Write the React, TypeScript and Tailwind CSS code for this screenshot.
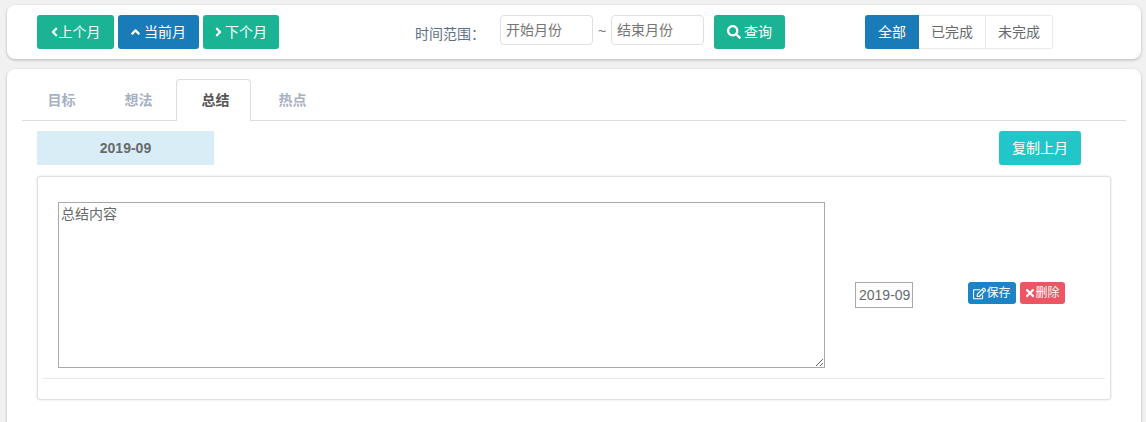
import React from 'react';
import { FaAngleLeft, FaAngleUp, FaAngleRight, FaSearch, FaRegEdit, FaTimes } from 'react-icons/fa';

const font = "font-['Liberation_Sans','Noto_Sans_CJK_SC',sans-serif]";

const tabs = ['目标', '想法', '总结', '热点'];

export default function App() {
  return (
    <div className={`${font} h-[422px] overflow-hidden bg-[#f1f1f1] pt-[5px] pl-[7px] pr-[5px] text-[14px] text-[#676a6c]`}>
      {/* toolbar */}
      <div className="flex h-[54px] items-start rounded-[8px] bg-white pt-[10px] pl-[30px] shadow-[0_1px_3px_rgba(0,0,0,0.25)]">
        <div className="flex gap-[4px]">
          <button className="flex h-[34px] w-[77px] items-center justify-center gap-[1px] rounded-[3px] bg-[#1ab394] text-white">
            <FaAngleLeft className="h-[14px] w-[7px]" />
            <span>上个月</span>
          </button>
          <button className="flex h-[34px] w-[81px] items-center justify-center gap-[4px] rounded-[3px] bg-[#1a7bb9] text-white">
            <FaAngleUp className="h-[14px] w-[9px]" />
            <span>当前月</span>
          </button>
          <button className="flex h-[34px] w-[76px] items-center justify-center gap-[3px] rounded-[3px] bg-[#1ab394] text-white">
            <FaAngleRight className="h-[14px] w-[7px]" />
            <span>下个月</span>
          </button>
        </div>

        <span className="ml-[136px] mt-[9px] w-[85px] text-[#5c7085]">时间范围：</span>
        <input
          placeholder="开始月份"
          className="h-[30px] w-[93px] rounded-[4px] border border-[#e0e0e0] px-[5px] text-[14px] outline-none placeholder:text-[#757575]"
        />
        <span className="mx-[5px] mt-[6px] w-[8px] text-[#757575]">~</span>
        <input
          placeholder="结束月份"
          className="h-[30px] w-[93px] rounded-[4px] border border-[#e0e0e0] px-[5px] text-[14px] outline-none placeholder:text-[#757575]"
        />
        <button className="ml-[10px] flex h-[34px] w-[71px] items-center justify-center gap-[3px] rounded-[3px] bg-[#1ab394] text-white">
          <FaSearch className="size-[14px]" />
          <span>查询</span>
        </button>

        <div className="ml-[80px] flex h-[34px]">
          <button className="w-[54px] rounded-l-[3px] bg-[#1a7bb9] text-white">全部</button>
          <button className="w-[67px] border border-l-0 border-[#e7eaec] bg-white">已完成</button>
          <button className="w-[67px] rounded-r-[3px] border border-l-0 border-[#e7eaec] bg-white">未完成</button>
        </div>
      </div>

      {/* main card */}
      <div className="mt-[10px] h-[400px] rounded-[8px] bg-white px-[15px] pt-[10px] shadow-[0_1px_3px_rgba(0,0,0,0.25)]">
        <div className="flex h-[42px] gap-[2px] border-b border-[#dddddd]">
          {tabs.map(tab => (
            <div
              key={tab}
              className={
                tab === '总结'
                  ? 'flex h-[42px] w-[75px] items-center justify-center rounded-t-[4px] border border-b-0 border-[#dddddd] bg-white pl-[4px] font-bold text-[#555555]'
                  : 'flex h-[42px] w-[75px] items-center justify-center pl-[4px] font-bold text-[#a7b1c2]'
              }
            >
              {tab}
            </div>
          ))}
        </div>

        <div className="pl-[15px] pr-[45px]">
          <div className="mt-[10px] flex h-[34px] items-center justify-between">
            <div className="flex h-[34px] w-[177px] items-center justify-center bg-[#d9edf7] font-bold">2019-09</div>
            <button className="h-[34px] w-[82px] rounded-[3px] bg-[#23c6c8] text-white">复制上月</button>
          </div>

          <div className="mt-[11px] h-[224px] w-[1074px] rounded-[3px] border border-[#e0e0e0] px-[5px] shadow-[0_0_2px_rgba(0,0,0,0.15)]">
            <div className="flex h-[202px] items-start border-b border-[#e7eaec] pl-[15px] pt-[25px]">
              <textarea
                defaultValue="总结内容"
                className="h-[166px] w-[767px] border border-[#a9a9a9] px-[2px] py-[1px] text-[14px] leading-[20px] outline-none"
              />
              <input
                defaultValue="2019-09"
                className="ml-[30px] mt-[80px] h-[26px] w-[58px] border border-[#a9a9a9] pl-[3px] text-[14px] outline-none"
              />
              <div className="ml-[55px] mt-[80px] flex gap-[4px]">
                <button className="flex h-[22px] w-[48px] items-center justify-center rounded-[3px] bg-[#1c84c6] text-[12px] text-white">
                  <FaRegEdit className="size-[13px]" />
                  <span>保存</span>
                </button>
                <button className="flex h-[22px] w-[45px] items-center justify-center rounded-[3px] bg-[#ed5565] text-[12px] text-white">
                  <FaTimes className="h-[12px] w-[10px]" />
                  <span>删除</span>
                </button>
              </div>
            </div>
          </div>
        </div>
      </div>
    </div>
  );
}
